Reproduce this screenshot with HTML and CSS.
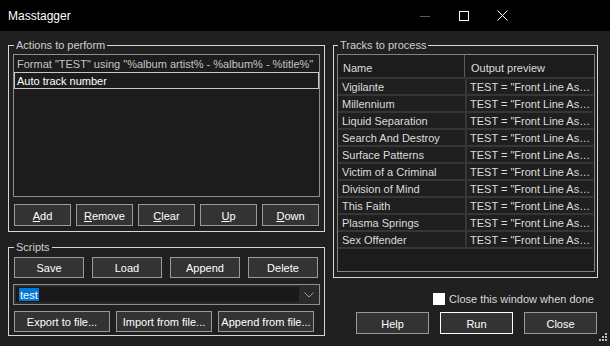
FILE: index.html
```html
<!DOCTYPE html>
<html>
<head>
<meta charset="utf-8">
<link rel="stylesheet" href="styles.css">
</head>
<body>
<div class="window">
  <div class="titlebar">
    <span class="title">Masstagger</span>
    <div class="caps">
      <span class="cap"><svg width="10" height="10" viewBox="0 0 10 10"><line x1="0" y1="5.5" x2="10" y2="5.5" stroke="#5a5a5a" stroke-width="1"/></svg></span>
      <span class="cap"><svg width="10" height="10" viewBox="0 0 10 10"><rect x="0.5" y="0.5" width="9" height="9" fill="none" stroke="#fff" stroke-width="1"/></svg></span>
      <span class="cap"><svg width="11" height="11" viewBox="0 0 11 11"><path d="M0.5 0.5 L10.5 10.5 M10.5 0.5 L0.5 10.5" stroke="#fff" stroke-width="1"/></svg></span>
    </div>
  </div>
  <div class="client">
    <div class="col-left">
      <div class="group actions">
        <div class="legend">Actions to perform</div>
        <div class="listbox">
          <div class="item">Format "TEST" using "%album artist% - %album% - %title%"</div>
          <div class="item focused">Auto track number</div>
        </div>
        <div class="btnrow five">
          <button class="btn"><u>A</u>dd</button>
          <button class="btn"><u>R</u>emove</button>
          <button class="btn"><u>C</u>lear</button>
          <button class="btn"><u>U</u>p</button>
          <button class="btn"><u>D</u>own</button>
        </div>
      </div>
      <div class="group scripts">
        <div class="legend">Scripts</div>
        <div class="btnrow four">
          <button class="btn">Save</button>
          <button class="btn">Load</button>
          <button class="btn">Append</button>
          <button class="btn">Delete</button>
        </div>
        <div class="combo">
          <div class="combo-field"><span class="sel">test</span></div>
          <div class="chev"><svg width="10" height="6" viewBox="0 0 10 6"><path d="M0.5 0.5 L5 5 L9.5 0.5" fill="none" stroke="#9a9a9a" stroke-width="1"/></svg></div>
        </div>
        <div class="btnrow three">
          <button class="btn">Export to file...</button>
          <button class="btn">Import from file...</button>
          <button class="btn">Append from file...</button>
        </div>
      </div>
    </div>
    <div class="col-right">
      <div class="group tracks">
        <div class="legend">Tracks to process</div>
        <div class="listview">
          <div class="lv-head">
            <div class="th c1">Name</div>
            <div class="th c2">Output preview</div>
          </div>
          <div class="lv-rows">
            <div class="row"><div class="td c1">Vigilante</div><div class="td c2">TEST = "Front Line As…</div></div>
            <div class="row"><div class="td c1">Millennium</div><div class="td c2">TEST = "Front Line As…</div></div>
            <div class="row"><div class="td c1">Liquid Separation</div><div class="td c2">TEST = "Front Line As…</div></div>
            <div class="row"><div class="td c1">Search And Destroy</div><div class="td c2">TEST = "Front Line As…</div></div>
            <div class="row"><div class="td c1">Surface Patterns</div><div class="td c2">TEST = "Front Line As…</div></div>
            <div class="row"><div class="td c1">Victim of a Criminal</div><div class="td c2">TEST = "Front Line As…</div></div>
            <div class="row"><div class="td c1">Division of Mind</div><div class="td c2">TEST = "Front Line As…</div></div>
            <div class="row"><div class="td c1">This Faith</div><div class="td c2">TEST = "Front Line As…</div></div>
            <div class="row"><div class="td c1">Plasma Springs</div><div class="td c2">TEST = "Front Line As…</div></div>
            <div class="row"><div class="td c1">Sex Offender</div><div class="td c2">TEST = "Front Line As…</div></div>
          </div>
        </div>
      </div>
      <label class="check"><span class="box"></span><span>Close this window when done</span></label>
      <div class="dlg-buttons">
        <button class="btn">Help</button>
        <button class="btn default">Run</button>
        <button class="btn">Close</button>
      </div>
    </div>
  </div>
  <svg class="grip" width="10" height="10" viewBox="0 0 10 10">
    <rect x="8" y="0" width="2" height="2" fill="#bdbdbd"/>
    <rect x="5" y="3" width="2" height="2" fill="#bdbdbd"/>
    <rect x="8" y="3" width="2" height="2" fill="#bdbdbd"/>
    <rect x="2" y="6" width="2" height="2" fill="#bdbdbd"/>
    <rect x="5" y="6" width="2" height="2" fill="#bdbdbd"/>
    <rect x="8" y="6" width="2" height="2" fill="#bdbdbd"/>
  </svg>
</div>
</body>
</html>
```

FILE: styles.css
```css
* { box-sizing: border-box; margin: 0; padding: 0; }
html, body { width: 610px; height: 346px; overflow: hidden; background: #202020; }
body { font-family: "Liberation Sans", Arial, sans-serif; font-size: 11px; color: #fff; }

.window { width: 610px; height: 346px; display: flex; flex-direction: column; position: relative; }

.titlebar { height: 31px; flex: none; background: #000; display: flex; align-items: center; padding-left: 8px; }
.title { flex: 1; font-size: 12px; color: #fff; padding-top: 1px; }
.caps { display: flex; margin-right: 88px; }
.cap { width: 39px; height: 31px; display: flex; align-items: center; justify-content: center; }

.client { flex: 1; display: flex; gap: 8px; padding: 14px 0 0 8px; }
.col-left { width: 317px; display: flex; flex-direction: column; gap: 15px; }
.col-right { width: 265px; display: flex; flex-direction: column; }

.group { border: 1px solid #d6d6d6; padding: 0 4px 5px 4px; }
.legend { margin: -8px 0 0 1px; height: 15px; line-height: 15px; padding: 0 2px; background: #202020; width: max-content; color: #cfcfcf; }

.listbox { margin-top: 1px; height: 143px; border: 1px solid #8e8e8e; background: #1c1c1c; }
.item { height: 17px; line-height: 16px; padding: 1px 0 0 3px; color: #c4c4c4; white-space: nowrap; overflow: hidden; }
.item.focused { border: 1px solid #c8c8c8; line-height: 15px; padding: 1px 0 0 2px; color: #fff; }

.btn { font: inherit; color: #fff; background: #333; border: 1px solid #9a9a9a; display: flex; align-items: center; justify-content: center; white-space: nowrap; padding-top: 1px; }
.btn u { text-decoration: underline; text-underline-offset: 1px; }

.btnrow { display: flex; }
.btnrow.five { margin-top: 7px; padding-left: 1px; gap: 5px; }
.btnrow.five .btn { width: 57px; height: 22px; }
.btnrow.four { margin-top: 2px; padding-left: 1px; gap: 8px; }
.btnrow.four .btn { width: 70px; height: 21px; }
.btnrow.three { margin-top: 6px; padding-left: 1px; gap: 6px; }
.btnrow.three .btn { width: 96px; height: 21px; }

.scripts { padding-bottom: 3px; }

.combo { margin-top: 6px; height: 21px; border: 1px solid #8e8e8e; background: #2a2a2a; display: flex; align-items: center; padding-left: 2px; }
.combo-field { width: 283px; height: 15px; background: #191919; display: flex; align-items: center; padding-left: 3px; }
.sel { background: #0078d7; color: #fff; height: 13px; line-height: 14px; padding: 0 1px; }
.chev { flex: 1; display: flex; justify-content: center; align-items: center; }

.tracks { padding: 0 2px 5px 3px; }
.listview { margin-top: 1px; height: 218px; border: 1px solid #828282; background: #1c1c1c; overflow: hidden; }
.lv-head { display: flex; height: 24px; border-bottom: 2px solid #363636; }
.th { display: flex; align-items: center; color: #dcdcdc; white-space: nowrap; padding-top: 3px; }
.th.c1 { width: 127px; padding-left: 5px; border-right: 1px solid #5a5a5a; }
.th.c2 { flex: 1; padding-left: 6px; }
.lv-rows { display: flex; flex-direction: column; }
.row { display: flex; gap: 2px; height: 17px; border-bottom: 2px solid #363636; background: #363636; width: 255px; }
.td { background: #1f1f1f; height: 15px; padding-top: 2px; line-height: 13px; color: #dcdcdc; white-space: nowrap; }
.td.c1 { width: 127px; padding-left: 4px; }
.td.c2 { width: 126px; padding-left: 3px; }

.check { display: flex; align-items: center; gap: 4px; margin-top: 15px; padding-left: 100px; height: 12px; color: #d8d8d8; }
.box { width: 12px; height: 12px; background: #fff; flex: none; }

.dlg-buttons { display: flex; justify-content: flex-end; gap: 11px; margin-top: 7px; padding-right: 1px; }
.dlg-buttons .btn { width: 73px; height: 22px; }
.dlg-buttons .btn.default { border-color: #fff; }

.grip { position: absolute; right: 3px; bottom: 3px; }
```
